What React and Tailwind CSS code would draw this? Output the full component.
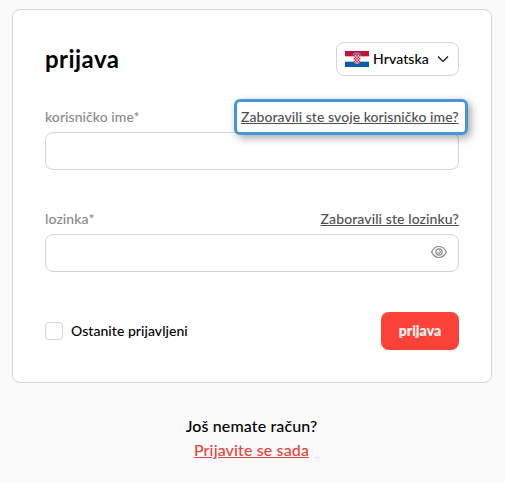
import React, { useState } from 'react';

const CroatiaFlag = () => (
    <svg className="h-4 w-6 shrink-0" viewBox="0 0 24 16">
        <rect width="24" height="16" fill="#fff" />
        <rect width="24" height="5.33" fill="#c4123a" />
        <rect y="10.67" width="24" height="5.33" fill="#0b5cab" />
        <path d="M8.6 4h6.8v5.4c0 2.3-1.5 3.4-3.4 3.4s-3.4-1.1-3.4-3.4z" fill="#f3d9e2" />
        <path
            d="M8.6 4H10v1.5H8.6zM11.3 4h1.4v1.5h-1.4zM14 4h1.4v1.5H14zM10 5.5h1.3V7H10zM12.7 5.5H14V7h-1.3zM8.6 7H10v1.5H8.6zM11.3 7h1.4v1.5h-1.4zM14 7h1.4v1.5H14zM10 8.5h1.3V10H10zM12.7 8.5H14V10h-1.3zM8.7 10H10v1.5h-.9zM11.3 10h1.4v1.5h-1.4zM14 10h1.3l-.4 1.5H14zM10 11.5h1.3v1.2L10 12.3zM12.7 11.5H14v.8l-1.3.4z"
            fill="#d81f3a"
        />
        <path d="M8.6 4 8 2l1.3.5 1.2-1.2 1.5.8 1.5-.8 1.2 1.2L16 2l-.6 2-1.7-.5h-3.4z" fill="#7d8fc0" />
    </svg>
);

const EyeIcon = () => (
    <svg className="h-4 w-4" viewBox="0 0 16 16" fill="none" stroke="#858585" strokeWidth="1.2">
        <path d="M.6 8C2.2 4.7 4.7 2.5 8 2.5S13.8 4.7 15.4 8C13.8 11.3 11.3 13.5 8 13.5S2.2 11.3.6 8z" />
        <circle cx="8" cy="8" r="3.2" />
        <path d="M8 6.6A1.4 1.4 0 1 1 6.6 8" strokeWidth="0.9" />
    </svg>
);

const App = () => {
    const [username, setUsername] = useState('');
    const [password, setPassword] = useState('');
    const [showPassword, setShowPassword] = useState(false);
    const [remember, setRemember] = useState(false);

    return (
        <div className="h-screen overflow-hidden bg-[#fafafa] pl-3 pt-[9px] font-['Lato','Noto_Sans',sans-serif] font-medium text-black">
            <form
                onSubmit={(e) => e.preventDefault()}
                className="h-[374px] w-[480px] rounded-lg border border-[#d4d4d4] bg-white p-8"
            >
                <div className="flex h-[34px] items-center justify-between">
                    <h1 className="text-2xl font-bold tracking-[0.45px]">prijava</h1>
                    <button
                        type="button"
                        className="flex h-[34px] w-[123px] items-center rounded-lg border border-[#d4d4d4] pl-2 text-sm tracking-[0.1px]"
                    >
                        <CroatiaFlag />
                        <span className="ml-1 w-[57px] text-left">Hrvatska</span>
                        <svg className="ml-[7px] h-3 w-3" viewBox="0 0 12 12" fill="none" stroke="#111" strokeWidth="1.2">
                            <path d="M1 3.5l5 5 5-5" />
                        </svg>
                    </button>
                </div>

                <div className="mt-[31px] flex h-5 items-center justify-between text-sm tracking-[0.06px]">
                    <label htmlFor="username" className="text-[#8a8a8a]">
                        korisničko ime*
                    </label>
                    <div className="relative z-10 -mr-[9px] flex h-9 w-[234px] items-center rounded-md border-3 border-[#4a94d8] bg-white pl-1 shadow-[3px_3px_8px_rgba(0,0,0,0.35)]">
                        <a href="#" className="whitespace-nowrap text-[#4f4f4f] underline">
                            Zaboravili ste svoje korisničko ime?
                        </a>
                    </div>
                </div>
                <input
                    id="username"
                    value={username}
                    onChange={(e) => setUsername(e.target.value)}
                    className="mt-[5px] block h-[38px] w-full rounded-lg border border-[#d4d4d4] px-3 text-sm outline-none"
                />

                <div className="mt-[39px] flex h-5 items-center justify-between text-sm tracking-[0.1px]">
                    <label htmlFor="password" className="text-[#8a8a8a]">
                        lozinka*
                    </label>
                    <a href="#" className="text-[#4f4f4f] underline">
                        Zaboravili ste lozinku?
                    </a>
                </div>
                <div className="mt-[5px] flex h-[38px] items-center rounded-lg border border-[#d4d4d4] pr-[11px]">
                    <input
                        id="password"
                        type={showPassword ? 'text' : 'password'}
                        value={password}
                        onChange={(e) => setPassword(e.target.value)}
                        className="h-full min-w-0 flex-1 px-3 text-sm outline-none"
                    />
                    <button type="button" className="mb-0.5" onClick={() => setShowPassword(!showPassword)}>
                        <EyeIcon />
                    </button>
                </div>

                <div className="mt-10 flex h-[38px] items-center justify-between">
                    <label className="flex items-center gap-2 text-sm tracking-[0.05px]">
                        <input
                            type="checkbox"
                            checked={remember}
                            onChange={(e) => setRemember(e.target.checked)}
                            className="h-[18px] w-[18px] appearance-none rounded border border-[#d4d4d4] checked:bg-[#fb4239]"
                        />
                        Ostanite prijavljeni
                    </label>
                    <button
                        type="submit"
                        className="h-[38px] w-[78px] rounded-lg bg-[#fb4239] text-sm font-extrabold text-[#fff0ef]"
                    >
                        prijava
                    </button>
                </div>
            </form>

            <div className="mt-[31px] w-[479px] text-center text-base leading-6 tracking-[0.13px]">
                <p>Još nemate račun?</p>
                <a href="#" className="block text-[#e5433c] underline">
                    Prijavite se sada
                </a>
            </div>
        </div>
    );
};

export default App;
